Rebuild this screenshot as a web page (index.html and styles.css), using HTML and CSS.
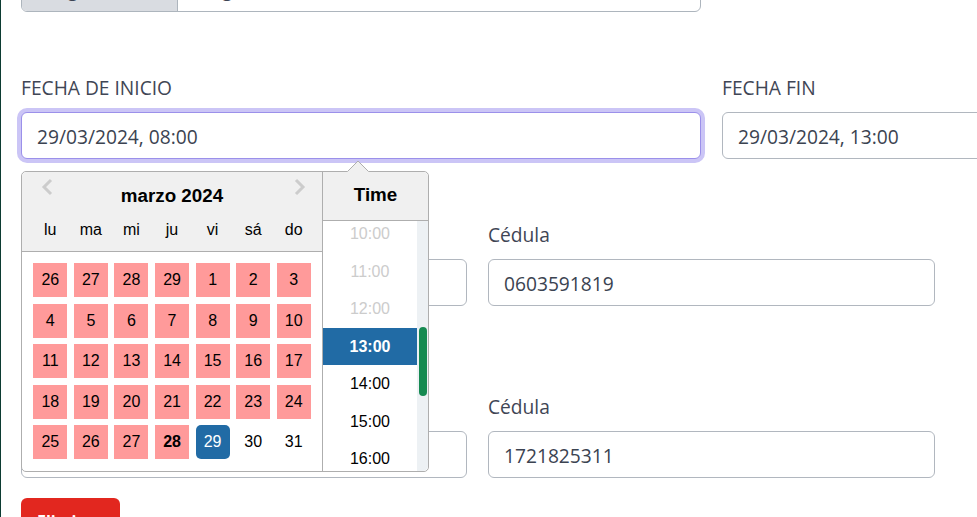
FILE: index.html
```html
<!DOCTYPE html>
<html lang="es">
<head>
<meta charset="utf-8">
<title>Reserva</title>
<link rel="stylesheet" href="styles.css">
</head>
<body>
<div class="app">
  <div class="sidebar"></div>
  <main class="content">
    <div class="input-group">
      <span class="prepend">Cargo</span>
      <span class="group-value">Sargento</span>
    </div>

    <div class="row dates">
      <div class="field field-start">
        <label class="label">FECHA DE INICIO</label>
        <div class="input is-focus">29/03/2024, 08:00</div>

        <div class="dp">
          <svg class="dp-tri" width="22" height="12" viewBox="0 0 22 12">
            <polygon points="0,12 11,1 22,12" fill="#f0f0f0"/>
            <polyline points="0.5,11.5 11,1 21.5,11.5" fill="none" stroke="#aeaeae" stroke-width="1"/>
          </svg>
          <div class="dp-month">
            <div class="dp-head">
              <svg class="dp-nav dp-prev" width="12" height="18" viewBox="0 0 12 18"><polyline points="10,2 3,9 10,16" fill="none" stroke="#cccccc" stroke-width="3"/></svg>
              <div class="dp-title">marzo 2024</div>
              <svg class="dp-nav dp-next" width="12" height="18" viewBox="0 0 12 18"><polyline points="2,2 9,9 2,16" fill="none" stroke="#cccccc" stroke-width="3"/></svg>
              <div class="dp-names">
                <span>lu</span><span>ma</span><span>mi</span><span>ju</span><span>vi</span><span>sá</span><span>do</span>
              </div>
            </div>
            <div class="dp-body">
              <div class="wk"><span class="d hl">26</span><span class="d hl">27</span><span class="d hl">28</span><span class="d hl">29</span><span class="d hl">1</span><span class="d hl">2</span><span class="d hl">3</span></div>
              <div class="wk"><span class="d hl">4</span><span class="d hl">5</span><span class="d hl">6</span><span class="d hl">7</span><span class="d hl">8</span><span class="d hl">9</span><span class="d hl">10</span></div>
              <div class="wk"><span class="d hl">11</span><span class="d hl">12</span><span class="d hl">13</span><span class="d hl">14</span><span class="d hl">15</span><span class="d hl">16</span><span class="d hl">17</span></div>
              <div class="wk"><span class="d hl">18</span><span class="d hl">19</span><span class="d hl">20</span><span class="d hl">21</span><span class="d hl">22</span><span class="d hl">23</span><span class="d hl">24</span></div>
              <div class="wk"><span class="d hl">25</span><span class="d hl">26</span><span class="d hl">27</span><span class="d hl today">28</span><span class="d sel">29</span><span class="d">30</span><span class="d">31</span></div>
            </div>
          </div>
          <div class="dp-time">
            <div class="dp-time-head">Time</div>
            <div class="dp-time-box">
              <ul class="dp-times">
                <li class="off">10:00</li>
                <li class="off">11:00</li>
                <li class="off">12:00</li>
                <li class="on">13:00</li>
                <li>14:00</li>
                <li>15:00</li>
                <li>16:00</li>
                <li>17:00</li>
              </ul>
              <div class="dp-track"><div class="dp-thumb"></div></div>
            </div>
          </div>
        </div>
      </div>
      <div class="field">
        <label class="label">FECHA FIN</label>
        <div class="input">29/03/2024, 13:00</div>
      </div>
    </div>

    <div class="row people first">
      <div class="field">
        <label class="label-sm">Nombre</label>
        <div class="input">Carlos Andrade</div>
      </div>
      <div class="field">
        <label class="label-sm">Cédula</label>
        <div class="input">0603591819</div>
      </div>
    </div>

    <div class="row people second">
      <div class="field">
        <label class="label-sm">Nombre</label>
        <div class="input">María López</div>
      </div>
      <div class="field">
        <label class="label-sm">Cédula</label>
        <div class="input">1721825311</div>
      </div>
    </div>

    <button class="btn-danger" type="button">Eliminar</button>
  </main>
</div>
</body>
</html>
```
FILE: styles.css
```css
html, body {
  margin: 0;
  padding: 0;
  background: #ffffff;
  overflow: hidden;
}

body {
  font-family: "Open Sans", "Noto Sans", sans-serif;
  color: #3c4453;
}

.app {
  display: flex;
  min-height: 517px;
}

.sidebar {
  flex: none;
  width: 1px;
  background: #0c3b32;
}

.content {
  flex: 1;
  min-width: 0;
  padding-left: 20px;
}

/* top input group (mostly scrolled out of view) */
.input-group {
  display: flex;
  width: 680px;
  height: 47px;
  box-sizing: border-box;
  margin-top: -35px;
  border: 1px solid #adb5bd;
  border-radius: 6px;
  overflow: hidden;
  font-size: 19.2px;
  line-height: 45px;
}

.prepend {
  flex: none;
  width: 156px;
  padding-left: 15px;
  box-sizing: border-box;
  background: #d9dce1;
  border-right: 1px solid #adb5bd;
}

.group-value {
  padding-left: 15px;
}

/* rows */
.row {
  display: grid;
}

.dates {
  margin-top: 61px;
  grid-template-columns: 680px 680px;
  column-gap: 21px;
}

.people {
  grid-template-columns: 446px 447px;
  column-gap: 21px;
}

.people.first {
  margin-top: 64px;
}

.people.second {
  margin-top: 89px;
}

.field {
  position: relative;
}

.label {
  display: block;
  font-size: 19.2px;
  line-height: 30px;
  margin-bottom: 9px;
  color: #3f4655;
}

.label-sm {
  display: block;
  font-size: 19.2px;
  line-height: 24px;
  margin-bottom: 12px;
  color: #3f4655;
}

.input {
  height: 47px;
  box-sizing: border-box;
  border: 1px solid #b1b7bf;
  border-radius: 6px;
  padding: 2px 15px 0;
  font-size: 19.2px;
  line-height: 44px;
  color: #3b4351;
  background: #fff;
  white-space: nowrap;
}

.input.is-focus {
  border-color: #9b90ea;
  box-shadow: 0 0 0 4px #cbc5f6;
}

.btn-danger {
  display: block;
  margin-top: 20px;
  padding: 11px 16px 10px;
  border: 0;
  border-radius: 6px;
  background: #e2271f;
  color: #ffffff;
  font-family: "Open Sans", sans-serif;
  font-size: 16px;
  font-weight: 700;
  line-height: 24px;
}

/* datepicker */
.dp {
  position: absolute;
  left: 0;
  top: 98px;
  z-index: 10;
  display: flex;
  border: 1px solid #aeaeae;
  border-radius: 5px;
  background: #ffffff;
  font-family: "Liberation Sans", Arial, sans-serif;
  color: #000;
}

.dp-tri {
  position: absolute;
  left: 325px;
  top: -12px;
}

.dp-month {
  width: 300px;
}

.dp-head {
  position: relative;
  background: #f0f0f0;
  border-bottom: 1px solid #aeaeae;
  border-top-left-radius: 5px;
  padding-top: 8px;
  text-align: center;
}

.dp-nav {
  position: absolute;
  top: 6px;
}

.dp-prev {
  left: 19px;
}

.dp-next {
  left: 272px;
}

.dp-title {
  font-size: 18.8px;
  font-weight: 700;
  line-height: 31px;
}

.dp-names {
  display: flex;
  padding: 0 8px;
  margin-top: -1px;
}

.dp-names span {
  width: 34px;
  margin: 3.32px;
  line-height: 34px;
  font-size: 16px;
  text-align: center;
}

.dp-body {
  padding: 8px;
}

.wk {
  display: flex;
}

.d {
  width: 34px;
  height: 34px;
  margin: 3.32px;
  line-height: 34px;
  font-size: 16px;
  text-align: center;
}

.d.hl {
  background: #ff9a9a;
}

.d.today {
  font-weight: 700;
}

.d.sel {
  background: #216ba5;
  color: #ffffff;
  border-radius: 5px;
}

.dp-time {
  width: 105px;
  border-left: 1px solid #aeaeae;
}

.dp-time-head {
  background: #f0f0f0;
  border-bottom: 1px solid #aeaeae;
  border-top-right-radius: 5px;
  padding: 8px 0 10px;
  line-height: 30px;
  font-size: 18.8px;
  font-weight: 700;
  text-align: center;
}

.dp-time-box {
  display: flex;
  height: 250px;
  overflow: hidden;
  border-bottom-right-radius: 5px;
}

.dp-times {
  list-style: none;
  margin: -6px 0 0;
  padding: 0;
  width: 94px;
}

.dp-times li {
  height: 37.5px;
  line-height: 37.5px;
  font-size: 16px;
  text-align: center;
}

.dp-times li.off {
  color: #cccccc;
}

.dp-times li.on {
  background: #216ba5;
  color: #ffffff;
  font-weight: 700;
}

.dp-track {
  flex: none;
  width: 11px;
  background: #edf1f4;
}

.dp-thumb {
  width: 8px;
  height: 69px;
  margin: 106px 0 0 2px;
  border-radius: 4px;
  background: #168a51;
}
```
